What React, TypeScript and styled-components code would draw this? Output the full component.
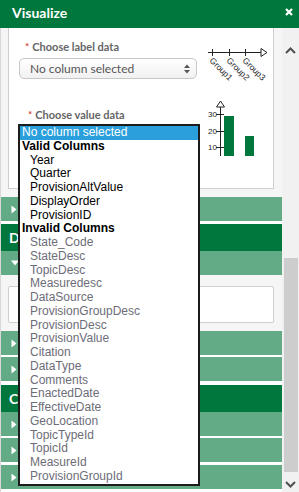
import React from 'react';
import styled, { createGlobalStyle } from 'styled-components';

const GlobalStyle = createGlobalStyle`
  html, body {
    margin: 0;
    padding: 0;
    background: #f5f5f5;
  }
  body {
    font-family: Lato, 'Open Sans', sans-serif;
  }
  * {
    box-sizing: border-box;
  }
`;

const Panel = styled.div`
  position: relative;
  width: 299px;
  height: 492px;
  overflow: hidden;
  background: #f5f5f5;
`;

const Header = styled.div`
  height: 28px;
  background: #00773c;
  color: white;
  display: flex;
  align-items: flex-start;
  justify-content: space-between;
  padding: 4px 6px 0 12px;
  font-family: Lato, sans-serif;
  font-weight: 700;
  font-size: 14px;
  line-height: 17px;
`;

const Close = styled.svg`
  margin-top: 4px;
`;

const Body = styled.div`
  display: flex;
  height: 464px;
`;

const Content = styled.div`
  width: 282px;
  border-left: 1px solid #d8d8d8;
  display: flex;
  flex-direction: column;
`;

const Card = styled.div`
  margin: 0 8px 0 7px;
  height: 167px;
  background: white;
  border: 1px solid #cfcfcf;
  border-top: none;
  padding: 10px 0 0 10px;
  display: flex;
  flex-direction: column;
  gap: 27px;
`;

const FieldRow = styled.div`
  display: flex;
  align-items: flex-start;
`;

const Field = styled.div`
  width: 179px;
  display: flex;
  flex-direction: column;
`;

const Label = styled.label<{ $indent: number }>`
  padding-left: ${({ $indent }) => $indent}px;
  font-size: 11px;
  font-weight: 700;
  color: #666;
  height: 20px;
  line-height: 17px;
  display: flex;
  gap: 3px;

  span {
    color: #d43f3a;
    font-size: 10px;
  }
`;

const Select = styled.div`
  height: 21px;
  border: 1px solid #c8c8c8;
  border-radius: 5px;
  background: linear-gradient(#ffffff, #f1f1f1);
  display: flex;
  align-items: center;
  justify-content: space-between;
  padding: 0 6px 0 10px;
  font-size: 12px;
  color: #555;
`;

const Spinner = styled.svg`
  flex: none;
`;

const ChartBox = styled.div<{ $top: number }>`
  margin-left: 10px;
  margin-top: ${({ $top }) => $top}px;
  height: 0;

  svg {
    display: block;
  }
`;

const Gap = styled.div<{ $h: number }>`
  height: ${({ $h }) => $h}px;
  flex: none;
`;

const Item = styled.div<{ $gap: number }>`
  height: ${({ $gap }) => 24 + $gap}px;
  flex: none;
  background: #63ab86;
  border-bottom: ${({ $gap }) => $gap}px solid white;
  display: flex;
  align-items: center;
  padding-left: 10px;
`;

const GroupHeader = styled.div`
  height: 27px;
  flex: none;
  background: #00773c;
  color: white;
  font-weight: 700;
  font-size: 14px;
  display: flex;
  align-items: center;
  padding-left: 8px;
`;

const Expanded = styled.div`
  height: 56px;
  flex: none;
  padding: 11px 8px 0 7px;
`;

const InputBox = styled.div`
  height: 37px;
  background: white;
  border: 1px solid #cfcfcf;
  border-radius: 2px;
`;

const Scrollbar = styled.div`
  width: 17px;
  background: #f1f1f1;
  display: flex;
  flex-direction: column;
  align-items: center;
  padding-top: 14px;
`;

const ScrollButton = styled.div`
  height: 16px;
  width: 17px;
  display: flex;
  align-items: center;
  justify-content: center;
  flex: none;
`;

const Track = styled.div`
  flex: 1;
  width: 17px;
  padding: 200px 1px 4px 2px;
  display: flex;
`;

const Thumb = styled.div`
  flex: 1;
  background: #cdcdcd;
`;

const List = styled.ul`
  position: absolute;
  left: 18px;
  top: 124px;
  width: 182px;
  margin: 0;
  padding: 0;
  list-style: none;
  background: white;
  border: 2px solid #1c1c1c;
  font-family: 'Liberation Sans', Arial, sans-serif;
  font-size: 12px;
  z-index: 5;
`;

const Option = styled.li<{ $kind: 'selected' | 'group' | 'valid' | 'invalid' }>`
  height: 13.75px;
  line-height: 13.75px;
  white-space: nowrap;
  padding-left: ${({ $kind }) => ($kind === 'valid' || $kind === 'invalid' ? 10 : 2)}px;
  font-weight: ${({ $kind }) => ($kind === 'group' ? 700 : 400)};
  color: ${({ $kind }) =>
    $kind === 'selected' ? 'white' : $kind === 'invalid' ? '#6d6d78' : '#000'};
  background: ${({ $kind }) => ($kind === 'selected' ? '#2b9fdc' : 'transparent')};
`;

const valid = ['Year', 'Quarter', 'ProvisionAltValue', 'DisplayOrder', 'ProvisionID'];
const invalid = [
  'State_Code',
  'StateDesc',
  'TopicDesc',
  'Measuredesc',
  'DataSource',
  'ProvisionGroupDesc',
  'ProvisionDesc',
  'ProvisionValue',
  'Citation',
  'DataType',
  'Comments',
  'EnactedDate',
  'EffectiveDate',
  'GeoLocation',
  'TopicTypeId',
  'TopicId',
  'MeasureId',
  'ProvisionGroupId',
];

const RightArrow = () => (
  <svg width="6" height="9" viewBox="0 0 6 9">
    <path d="M0.5 0.5 L5.5 4.5 L0.5 8.5 Z" fill="white" />
  </svg>
);

const DownArrow = () => (
  <svg width="8" height="6" viewBox="0 0 8 6">
    <path d="M0 0.5 L8 0.5 L4 5.5 Z" fill="white" />
  </svg>
);

const LabelChart = () => (
  <svg width="66" height="50" viewBox="0 0 66 50">
    <line x1="1" y1="14.5" x2="54" y2="14.5" stroke="#222" strokeWidth="1" />
    <path d="M54 10.5 L60 14.5 L54 18.5 Z" fill="white" stroke="#222" strokeWidth="1" />
    {[5, 22, 38].map((x, i) => (
      <g key={x}>
        <line x1={x + 0.5} y1="11" x2={x + 0.5} y2="18" stroke="#222" strokeWidth="1" />
        <text
          x={x - 3}
          y={23}
          fontSize="8.5"
          fontFamily="'Liberation Sans', Arial, sans-serif"
          fill="#222"
          transform={`rotate(45 ${x - 3} 23)`}
        >
          {`Group${i + 1}`}
        </text>
      </g>
    ))}
  </svg>
);

const ValueChart = () => (
  <svg width="60" height="58" viewBox="0 0 60 58">
    <line x1="12.5" y1="5" x2="12.5" y2="57" stroke="#222" strokeWidth="1" />
    <path d="M8.5 8 L12.5 2 L16.5 8 Z" fill="white" stroke="#222" strokeWidth="1" />
    {[
      ['30', 15],
      ['20', 32],
      ['10', 48],
    ].map(([t, y]) => (
      <g key={t}>
        <line x1="8" y1={Number(y) + 0.5} x2="16" y2={Number(y) + 0.5} stroke="#222" />
        <text
          x="0"
          y={Number(y) + 3}
          fontSize="8"
          fontFamily="'Liberation Sans', Arial, sans-serif"
          fill="#222"
        >
          {t}
        </text>
      </g>
    ))}
    <rect x="16" y="17" width="10" height="40" fill="#00773c" />
    <rect x="37" y="37" width="9" height="20" fill="#00773c" />
  </svg>
);

export default function App() {
  return (
    <Panel>
      <GlobalStyle />
      <Header>
        Visualize
        <Close width="8" height="8" viewBox="0 0 8 8">
          <path d="M1 1 L7 7 M7 1 L1 7" stroke="white" strokeWidth="2.2" />
        </Close>
      </Header>
      <Body>
        <Content>
          <Card>
            <FieldRow>
              <Field>
                <Label $indent={6}>
                  <span>*</span>Choose label data
                </Label>
                <Select>
                  No column selected
                  <Spinner width="6" height="10" viewBox="0 0 6 10">
                    <path d="M0 4 L3 0.5 L6 4 Z M0 6 L3 9.5 L6 6 Z" fill="#555" />
                  </Spinner>
                </Select>
              </Field>
              <ChartBox $top={0}>
                <LabelChart />
              </ChartBox>
            </FieldRow>
            <FieldRow>
              <Field>
                <Label $indent={9}>
                  <span>*</span>Choose value data
                </Label>
                <Select />
              </Field>
              <ChartBox $top={-7}>
                <ValueChart />
              </ChartBox>
            </FieldRow>
          </Card>
          <Gap $h={8} />
          <Item $gap={3}>
            <RightArrow />
          </Item>
          <GroupHeader>D</GroupHeader>
          <Item $gap={0}>
            <DownArrow />
          </Item>
          <Expanded>
            <InputBox />
          </Expanded>
          <Item $gap={2}>
            <RightArrow />
          </Item>
          <Item $gap={4}>
            <RightArrow />
          </Item>
          <GroupHeader>C</GroupHeader>
          <Item $gap={2}>
            <RightArrow />
          </Item>
          <Item $gap={3}>
            <RightArrow />
          </Item>
          <Item $gap={3}>
            <RightArrow />
          </Item>
        </Content>
        <Scrollbar>
          <ScrollButton>
            <svg width="11" height="7" viewBox="0 0 11 7">
              <path d="M1 6 L5.5 1.5 L10 6" fill="none" stroke="#505050" strokeWidth="2" />
            </svg>
          </ScrollButton>
          <Track>
            <Thumb />
          </Track>
          <ScrollButton>
            <svg width="11" height="7" viewBox="0 0 11 7">
              <path d="M1 1 L5.5 5.5 L10 1" fill="none" stroke="#505050" strokeWidth="2" />
            </svg>
          </ScrollButton>
        </Scrollbar>
      </Body>
      <List>
        <Option $kind="selected">No column selected</Option>
        <Option $kind="group">Valid Columns</Option>
        {valid.map((v) => (
          <Option key={v} $kind="valid">
            {v}
          </Option>
        ))}
        <Option $kind="group">Invalid Columns</Option>
        {invalid.map((v) => (
          <Option key={v} $kind="invalid">
            {v}
          </Option>
        ))}
      </List>
    </Panel>
  );
}
